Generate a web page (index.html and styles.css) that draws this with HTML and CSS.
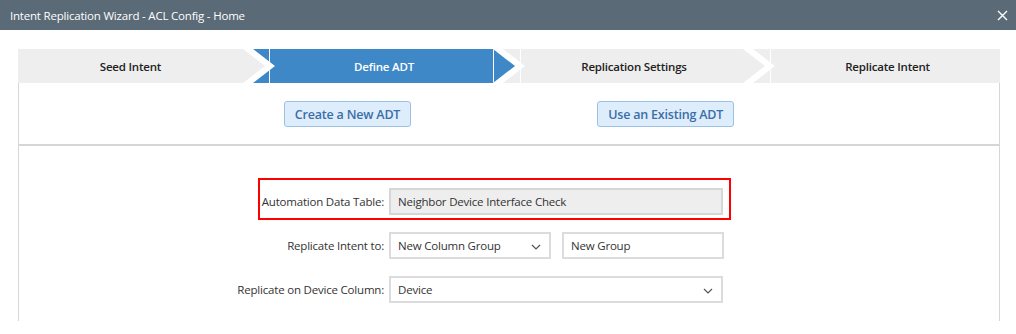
FILE: index.html
```html
<!DOCTYPE html>
<html lang="en">
<head>
    <meta charset="UTF-8">
    <title>Intent Replication Wizard - ACL Config - Home</title>
    <link rel="stylesheet" href="styles.css">
</head>
<body>
    <div class="title-bar">
        <span class="title">Intent Replication Wizard - ACL Config - Home</span>
        <svg class="close" width="11" height="11" viewBox="0 0 11 11">
            <path d="M1 1 L10 10 M10 1 L1 10" stroke="#ffffff" stroke-width="1.4" fill="none"/>
        </svg>
    </div>

    <div class="wizard">
        <div class="steps">
            <div class="step step-first">Seed Intent</div>
            <div class="step step-mid active">Define ADT</div>
            <div class="step step-mid">Replication Settings</div>
            <div class="step step-last">Replicate Intent</div>
        </div>

        <div class="panel">
            <div class="choice-row">
                <button class="choice-btn">Create a New ADT</button>
                <button class="choice-btn">Use an Existing ADT</button>
            </div>

            <div class="form">
                <div class="form-row">
                    <span class="highlight"></span>
                    <label class="form-label">Automation Data Table:</label>
                    <div class="field field-wide field-readonly">Neighbor Device Interface Check</div>
                </div>
                <div class="form-row">
                    <label class="form-label">Replicate Intent to:</label>
                    <div class="field field-half select">
                        New Column Group
                        <svg class="caret" width="10" height="6" viewBox="0 0 10 6"><path d="M1 1 L5 5 L9 1" stroke="#555" stroke-width="1.2" fill="none"/></svg>
                    </div>
                    <div class="field field-half">New Group</div>
                </div>
                <div class="form-row">
                    <label class="form-label">Replicate on Device Column:</label>
                    <div class="field field-wide select">
                        Device
                        <svg class="caret" width="10" height="6" viewBox="0 0 10 6"><path d="M1 1 L5 5 L9 1" stroke="#555" stroke-width="1.2" fill="none"/></svg>
                    </div>
                </div>
            </div>
        </div>
    </div>
</body>
</html>
```

FILE: styles.css
```css
:root {
    --bar-color: #5a6a77;
    --step-gray: #eeeeee;
    --step-blue: #3f88c7;
    --text-color: #333333;
    --line-color: #d6d6d6;
}

body {
    margin: 0;
    font-family: 'Open Sans', 'Noto Sans', sans-serif;
    color: var(--text-color);
    background: #ffffff;
}

.title-bar {
    height: 30px;
    background-color: var(--bar-color);
    color: #ffffff;
    display: flex;
    align-items: center;
    justify-content: space-between;
    padding: 0 8px 0 10px;
    box-sizing: border-box;
}

.title {
    font-size: 11.5px;
    letter-spacing: -0.2px;
}

.close {
    display: block;
}

.wizard {
    padding: 19px 16px 0 18px;
}

.steps {
    display: flex;
    height: 34px;
}

.step {
    height: 34px;
    display: flex;
    align-items: center;
    justify-content: center;
    background-color: var(--step-gray);
    font-size: 11.5px;
    font-weight: 600;
    letter-spacing: -0.2px;
    color: #222;
    box-sizing: border-box;
    padding: 0 22px;
    margin-left: -12px;
}

.step-first {
    width: 247px;
    margin-left: 0;
    padding-left: 0;
    clip-path: polygon(0 0, calc(100% - 22px) 0, 100% 50%, calc(100% - 22px) 100%, 0 100%);
}

.step-mid {
    width: 262px;
    clip-path: polygon(0 0, calc(100% - 22px) 0, 100% 50%, calc(100% - 22px) 100%, 0 100%, 22px 50%);
}

.step-last {
    width: 247px;
    padding-right: 0;
    clip-path: polygon(0 0, 100% 0, 100% 100%, 0 100%, 22px 50%);
}

/* thin white seams where the arrow pieces meet */
.step-mid,
.step-last {
    background-image: linear-gradient(to right, transparent 17px, #ffffff 17px, #ffffff 18px, transparent 18px);
}

.step.active {
    background-color: var(--step-blue);
    color: #ffffff;
    background-image:
        linear-gradient(to right, transparent 16px, #ffffff 16px, #ffffff 17px, transparent 17px),
        linear-gradient(to left, transparent 21px, #ffffff 21px, #ffffff 22px, transparent 22px);
}

.panel {
    height: 238px;
    border-left: 1px solid var(--line-color);
    border-right: 1px solid var(--line-color);
}

.choice-row {
    display: flex;
    justify-content: center;
    gap: 186px;
    padding: 18px 0 17px;
    border-bottom: 2px solid var(--line-color);
}

.choice-btn {
    height: 26px;
    padding: 0 10px;
    font-family: inherit;
    font-size: 12.5px;
    font-weight: 600;
    letter-spacing: -0.2px;
    color: #3a6ea6;
    background-color: #deedfc;
    border: 1px solid #9cc1e3;
    border-radius: 3px;
}

.form {
    padding-top: 42px;
    display: flex;
    flex-direction: column;
    gap: 17px;
}

.form-row {
    position: relative;
    display: flex;
    align-items: center;
    gap: 5px;
}

.highlight {
    position: absolute;
    left: 239px;
    top: -10px;
    width: 469px;
    height: 38px;
    border: 2px solid #ff0000;
}

.form-label {
    width: 365px;
    text-align: right;
    font-size: 11.5px;
    letter-spacing: -0.2px;
}

.field {
    position: relative;
    height: 27px;
    box-sizing: border-box;
    border: 2px solid #dcdcdc;
    background: #ffffff;
    display: flex;
    align-items: center;
    padding-left: 7px;
    font-size: 11.5px;
    letter-spacing: -0.2px;
}

.field-wide {
    width: 334px;
}

.field-half {
    width: 162px;
}

.field-half + .field-half {
    margin-left: 6px;
}

.field-readonly {
    background-color: #eeeeee;
    border-color: #d6d6d6;
}

.caret {
    position: absolute;
    right: 8px;
    top: 10px;
}
```
